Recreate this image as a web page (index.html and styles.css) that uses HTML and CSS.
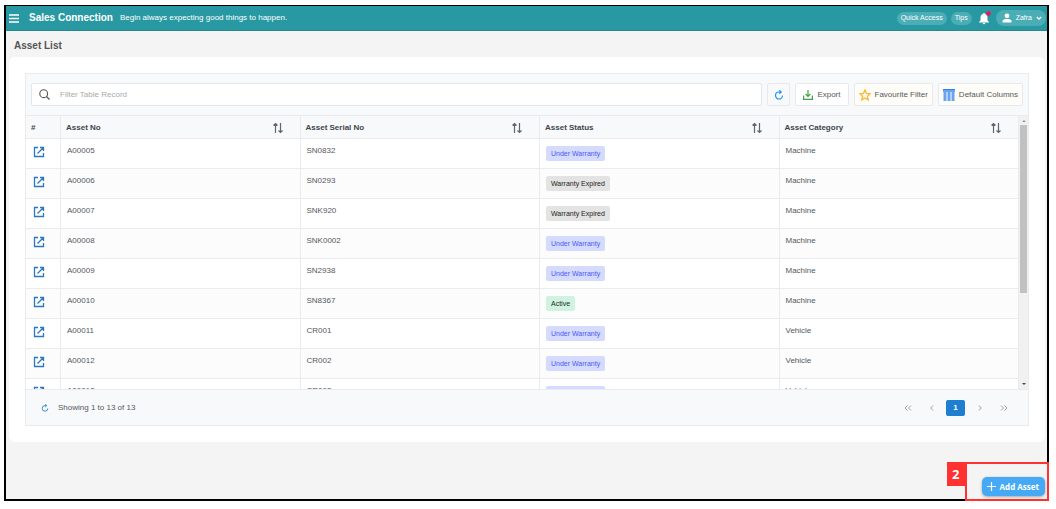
FILE: index.html
```html
<!DOCTYPE html>
<html lang="en">
<head>
<meta charset="utf-8">
<title>Asset List - Sales Connection</title>
<link rel="stylesheet" href="styles.css">
</head>
<body>
<svg class="defs" aria-hidden="true">
  <symbol id="open" viewBox="0 0 12 12"><path d="M5 1.500H1.500V10.500H10.500V7M7 1.500h3.500V5M10.300 1.700L4.500 7.500" fill="none" stroke="currentColor" stroke-width="1.300"/></symbol>
  <symbol id="sort" viewBox="0 0 10 12"><path d="M2.500 11V1.500M.5 3.500l2-2 2 2M7.500 1v9.500M5.500 8.500l2 2 2-2" fill="none" stroke="#5f656c" stroke-width="1.200"/></symbol>
  <symbol id="reload" viewBox="0 0 10 10"><path d="M8.500 5.500A3.500 3.500 0 1 1 5 2h2M5.300.3L7.200 2 5.300 3.700" fill="none" stroke="currentColor" stroke-width="1.200"/></symbol>
</svg>
<div class="app">
  <header class="topbar">
    <button class="menu" aria-label="Menu"><svg width="10" height="9" viewBox="0 0 10 9"><path d="M0 1h10M0 4.500h10M0 8h10" stroke="#fff" stroke-width="1.500"/></svg></button>
    <strong class="brand">Sales Connection</strong>
    <span class="tagline">Begin always expecting good things to happen.</span>
    <nav class="actions">
      <button class="pill">Quick Access</button>
      <button class="pill">Tips</button>
      <button class="bell" aria-label="Notifications"><svg width="16" height="14" viewBox="0 0 16 14"><path d="M7 3a1 1 0 0 1 2 0c1.800.5 2.500 2 2.500 3.500V9.500L13 11v.5H3V11l1.500-1.500v-3C4.500 5 5.200 3.500 7 3zM6.700 12h2.600a1.300 1.300 0 0 1-2.600 0z" fill="#fff"/><circle cx="12.500" cy="2.500" r="2.300" fill="#ee1560"/></svg></button>
      <button class="pill user"><svg width="10" height="10" viewBox="0 0 10 10"><circle cx="5" cy="2.800" r="2.400" fill="#fff"/><path d="M.5 9.500V8C.5 6.500 3 6 5 6s4.500.5 4.500 2v1.500z" fill="#fff"/></svg>Zafra<svg width="6" height="5" viewBox="0 0 6 5"><path d="M.8 1L3 3.200 5.200 1" fill="none" stroke="#fff" stroke-width="1.300"/></svg></button>
    </nav>
  </header>
  <main class="main">
    <h1 class="title">Asset List</h1>
    <section class="card">
      <div class="panel">
        <div class="toolbar">
          <label class="search"><svg width="11" height="11" viewBox="0 0 11 11"><circle cx="4.700" cy="4.700" r="3.900" fill="none" stroke="#555" stroke-width="1.100"/><path d="M7.500 7.500l3 3" stroke="#555" stroke-width="1.300"/></svg><input type="text" placeholder="Filter Table Record" aria-label="Filter Table Record"></label>
          <button class="tool refresh" aria-label="Refresh"><svg width="10" height="10"><use href="#reload"/></svg></button>
          <button class="tool export"><svg width="10" height="10" viewBox="0 0 10 10"><path d="M5 0v6M2.600 4L5 6.400 7.400 4M.6 5.500V9.300H9.400V5.500" fill="none" stroke="#43a047" stroke-width="1.200"/></svg>Export</button>
          <button class="tool warm"><svg width="12" height="12" viewBox="0 0 12 12"><path d="M6 .9l1.500 3.400 3.700.4-2.800 2.500.8 3.700L6 9l-3.200 1.900.8-3.700L.8 4.700l3.700-.4z" fill="none" stroke="#ffb432" stroke-width="1.300"/></svg>Favourite Filter</button>
          <button class="tool warm"><svg width="12" height="12" viewBox="0 0 12 12"><path d="M0 0h12v3H0zM.5 3H3.500v9H.5zM4.500 3h3v9h-3zM8.500 3h3v9h-3z" fill="#68a3f4"/><path d="M0 .5h12" stroke="#3d7fe0"/></svg>Default Columns</button>
        </div>
        <div class="viewport">
          <div class="scroller">
            <table class="grid">
              <thead><tr>
                <th class="index">#</th>
                <th><div class="head">Asset No<svg width="10" height="12"><use href="#sort"/></svg></div></th>
                <th><div class="head">Asset Serial No<svg width="10" height="12"><use href="#sort"/></svg></div></th>
                <th><div class="head">Asset Status<svg width="10" height="12"><use href="#sort"/></svg></div></th>
                <th><div class="head">Asset Category<svg width="10" height="12"><use href="#sort"/></svg></div></th>
              </tr></thead>
              <tbody>
                <tr><td><a href="#a5" aria-label="Open A00005"><svg width="12" height="12"><use href="#open"/></svg></a></td><td>A00005</td><td>SN0832</td><td><span class="tag under">Under Warranty</span></td><td>Machine</td></tr>
                <tr><td><a href="#a6" aria-label="Open A00006"><svg width="12" height="12"><use href="#open"/></svg></a></td><td>A00006</td><td>SN0293</td><td><span class="tag expired">Warranty Expired</span></td><td>Machine</td></tr>
                <tr><td><a href="#a7" aria-label="Open A00007"><svg width="12" height="12"><use href="#open"/></svg></a></td><td>A00007</td><td>SNK920</td><td><span class="tag expired">Warranty Expired</span></td><td>Machine</td></tr>
                <tr><td><a href="#a8" aria-label="Open A00008"><svg width="12" height="12"><use href="#open"/></svg></a></td><td>A00008</td><td>SNK0002</td><td><span class="tag under">Under Warranty</span></td><td>Machine</td></tr>
                <tr><td><a href="#a9" aria-label="Open A00009"><svg width="12" height="12"><use href="#open"/></svg></a></td><td>A00009</td><td>SN2938</td><td><span class="tag under">Under Warranty</span></td><td>Machine</td></tr>
                <tr><td><a href="#a10" aria-label="Open A00010"><svg width="12" height="12"><use href="#open"/></svg></a></td><td>A00010</td><td>SN8367</td><td><span class="tag active">Active</span></td><td>Machine</td></tr>
                <tr><td><a href="#a11" aria-label="Open A00011"><svg width="12" height="12"><use href="#open"/></svg></a></td><td>A00011</td><td>CR001</td><td><span class="tag under">Under Warranty</span></td><td>Vehicle</td></tr>
                <tr><td><a href="#a12" aria-label="Open A00012"><svg width="12" height="12"><use href="#open"/></svg></a></td><td>A00012</td><td>CR002</td><td><span class="tag under">Under Warranty</span></td><td>Vehicle</td></tr>
                <tr><td><a href="#a13" aria-label="Open A00013"><svg width="12" height="12"><use href="#open"/></svg></a></td><td>A00013</td><td>CR003</td><td><span class="tag under">Under Warranty</span></td><td>Vehicle</td></tr>
              </tbody>
            </table>
          </div>
          <div class="scrollbar" aria-hidden="true"><span class="arrow up"></span><span class="thumb"></span><span class="arrow down"></span></div>
        </div>
        <footer class="footer">
          <button class="reload" aria-label="Reload"><svg width="8" height="8" viewBox="0 0 10 10"><use href="#reload" width="10" height="10"/></svg></button>
          <span>Showing 1 to 13 of 13</span>
          <nav class="pager" aria-label="Pages">
            <button class="page" aria-label="First"><svg width="8" height="8" viewBox="0 0 8 8"><path d="M3.500 1.500L1 4l2.500 2.500M7 1.500L4.500 4 7 6.500" class="chev"/></svg></button>
            <button class="page" aria-label="Previous"><svg width="8" height="8" viewBox="0 0 8 8"><path d="M5.200 1.500L2.700 4l2.500 2.500" class="chev"/></svg></button>
            <button class="page current">1</button>
            <button class="page" aria-label="Next"><svg width="8" height="8" viewBox="0 0 8 8"><path d="M2.800 1.500L5.300 4 2.800 6.500" class="chev"/></svg></button>
            <button class="page" aria-label="Last"><svg width="8" height="8" viewBox="0 0 8 8"><path d="M1 1.500L3.500 4 1 6.500M4.500 1.500L7 4 4.500 6.500" class="chev"/></svg></button>
          </nav>
        </footer>
      </div>
    </section>
  </main>
  <div class="callout"><span class="step">2</span><div class="outline"><button class="add"><svg width="9" height="9" viewBox="0 0 9 9"><path d="M4.500 0v9M0 4.500h9" stroke="#fff" stroke-width="1.200"/></svg>Add Asset</button></div></div>
</div>
</body>
</html>
```
FILE: styles.css
```css
* { box-sizing: border-box; }
body { margin: 0; padding: 5px 7px 8px 4px; background: #fff; font: 8px/12px "Liberation Sans", Arial, sans-serif; color: #55585c; height: 100vh; }
button { font: inherit; color: inherit; border: 0; padding: 0; background: none; display: flex; align-items: center; justify-content: center; white-space: nowrap; }
svg { display: block; flex: none; }
.defs { position: absolute; width: 0; height: 0; }
.app { position: relative; min-height: 100%; border: 1px solid #000; border-width: 1px 2px 2px; background: #f4f4f4; }
.topbar { display: flex; align-items: center; height: 25px; padding: 0 1px 0 3px; background: #2899a3; border-bottom: 1px solid #2a8790; color: #fff; }
.brand { font-size: 10px; margin: 0 7px 0 10px; }
.actions { display: flex; align-items: center; gap: 4px; margin-left: auto; }
.pill { height: 13px; padding: 0 4px; border-radius: 7px; background: #4badb5; font-size: 7px; }
.user { height: 16px; gap: 4px; border-radius: 8px; padding: 0 4px 0 6px; }
.main { padding: 0 2px 0 3px; }
.title { margin: 0; padding: 8px 5px 4px; font-size: 10px; line-height: 14px; color: #555; }
.card { padding: 16px; background: #fff; border-radius: 6px; }
.panel { border: 1px solid #e9ebee; background: #f8f9fb; }
.toolbar { display: flex; gap: 5px; padding: 9px 5px; }
.search { display: flex; flex: 1; align-items: center; gap: 10px; height: 23px; padding: 0 7px; background: #fff; border: 1px solid #e4e7ea; border-radius: 2px; }
.search input { flex: 1; min-width: 0; border: 0; padding: 0; outline: 0; background: none; font: inherit; }
.search input::placeholder { color: #aaa; opacity: 1; }
.tool { height: 23px; gap: 4px; padding: 0 4px; border: 1px solid #e7e9ec; border-radius: 2px; background: #fff; }
.export { padding: 0 7px; }
.refresh { width: 23px; color: #2196f3; background: #f8f9fb; }
.warm { background: #fffdf8; }
.viewport { display: flex; height: 275px; border-top: 1px solid #e9ebee; border-bottom: 1px solid #e9ebee; }
.scroller { flex: 1; min-width: 0; overflow: hidden; background: #fff; }
.grid { width: 100%; table-layout: fixed; border-collapse: separate; border-spacing: 0; }
.grid th, .grid td { text-align: left; border-right: 1px solid #e9ebee; border-bottom: 1px solid #e9ebee; }
.grid th { height: 23px; padding: 1px 5px 0; background: #f8f9fb; color: #40464e; }
.grid .index { width: 35px; }
.head { display: flex; align-items: center; justify-content: space-between; padding-right: 12px; }
.grid td { height: 30px; padding: 6px 6px 0; vertical-align: top; }
.grid td:first-child { padding: 7px; }
.grid tbody tr:nth-child(even) td { background: #fcfcfc; }
.grid a { display: block; width: 12px; color: #2c78c0; }
.tag { display: inline-block; height: 15px; margin-top: 1px; padding: 0 5px; border-radius: 2px; font-size: 7px; line-height: 15px; vertical-align: top; }
.under { background: #d5daff; color: #4a5bf0; }
.expired { background: #e3e3e3; color: #222; }
.active { background: #cff3e0; color: #1d2b24; }
.scrollbar { display: flex; flex-direction: column; align-items: center; width: 9px; padding: 4px 0; background: #f1f1f1; }
.thumb { width: 7px; height: 168px; margin-top: 3px; background: #c1c1c1; }
.arrow { border: 2px solid transparent; }
.up { border-top: 0; border-bottom-color: #999; }
.down { border-bottom: 0; border-top-color: #444; margin-top: auto; }
.footer { display: flex; align-items: center; height: 35px; padding: 0 15px; gap: 9px; }
.reload { color: #2c8ed0; }
.pager { display: flex; align-items: center; gap: 5px; margin-left: auto; }
.page { width: 19px; height: 16px; color: #999; }
.current { background: #1e7fd0; border-radius: 2px; color: #fff; font-weight: bold; }
.chev { fill: none; stroke: #a0a0a0; stroke-width: 1; }
.callout { position: absolute; right: -2px; bottom: -2px; display: flex; align-items: flex-start; }
.step { width: 18px; height: 24px; background: #ff3131; color: #fff; font: bold 13px/24px "Open Sans", sans-serif; text-align: center; }
.outline { border: 2px solid #ff3131; padding: 13px 2px 3px 15px; }
.add { height: 19px; gap: 4px; padding: 0 6px 0 5px; border-radius: 5px; background: #46a9f5; color: #fff; font: bold 8px/12px "Open Sans", sans-serif; box-shadow: 0 1px 3px #0005; }
```
